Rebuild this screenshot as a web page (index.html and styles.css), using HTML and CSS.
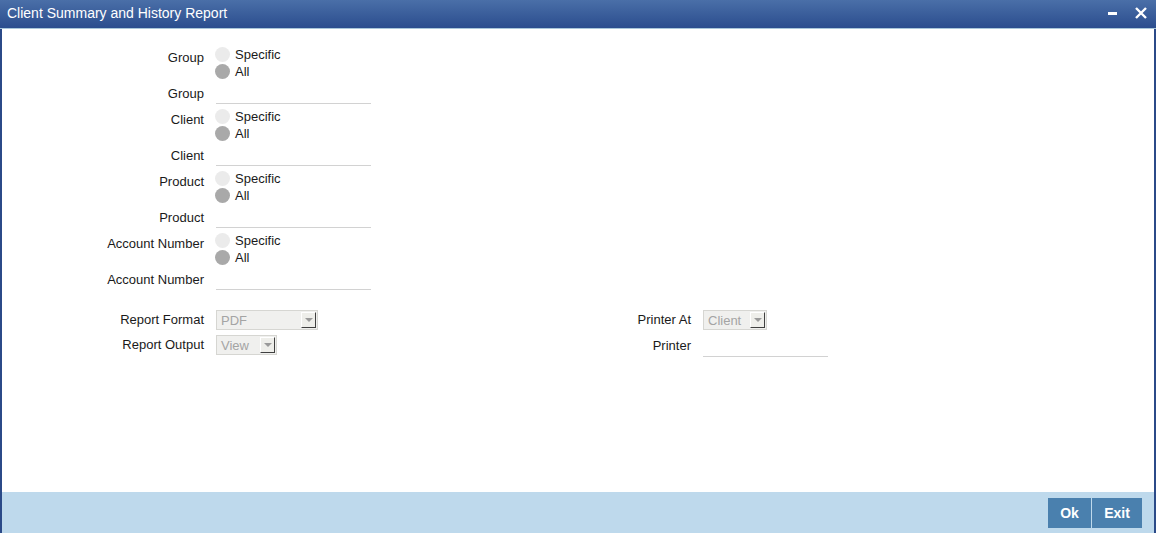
FILE: index.html
```html
<!DOCTYPE html>
<html>

<head>
  <link rel="stylesheet" href="styles.css">
</head>

<body>
  <div class="window">
    <div class="titlebar">
      <span class="title">Client Summary and History Report</span>
      <div class="win-controls">
        <svg class="win-btn" width="14" height="14" viewBox="0 0 14 14">
          <rect x="3" y="6" width="9" height="3" fill="#fff" />
        </svg>
        <svg class="win-btn" width="14" height="14" viewBox="0 0 14 14">
          <path d="M2 2 L12 12 M12 2 L2 12" stroke="#fff" stroke-width="2.4" />
        </svg>
      </div>
    </div>

    <div class="main">
      <div class="form">
        <div class="section">
          <div class="row">
            <label class="lbl lbl-radio">Group</label>
            <div class="radios">
              <div class="radio"><span class="dot"></span>Specific</div>
              <div class="radio"><span class="dot on"></span>All</div>
            </div>
          </div>
          <div class="row text-row">
            <label class="lbl">Group</label>
            <div class="field"></div>
          </div>
        </div>

        <div class="section">
          <div class="row">
            <label class="lbl lbl-radio">Client</label>
            <div class="radios">
              <div class="radio"><span class="dot"></span>Specific</div>
              <div class="radio"><span class="dot on"></span>All</div>
            </div>
          </div>
          <div class="row text-row">
            <label class="lbl">Client</label>
            <div class="field"></div>
          </div>
        </div>

        <div class="section">
          <div class="row">
            <label class="lbl lbl-radio">Product</label>
            <div class="radios">
              <div class="radio"><span class="dot"></span>Specific</div>
              <div class="radio"><span class="dot on"></span>All</div>
            </div>
          </div>
          <div class="row text-row">
            <label class="lbl">Product</label>
            <div class="field"></div>
          </div>
        </div>

        <div class="section">
          <div class="row">
            <label class="lbl lbl-radio">Account Number</label>
            <div class="radios">
              <div class="radio"><span class="dot"></span>Specific</div>
              <div class="radio"><span class="dot on"></span>All</div>
            </div>
          </div>
          <div class="row text-row">
            <label class="lbl">Account Number</label>
            <div class="field"></div>
          </div>
        </div>

        <div class="report">
          <div class="report-col left">
            <div class="row sel-row">
              <label class="lbl">Report Format</label>
              <div class="select sel-format">
                <span>PDF</span>
                <span class="arrow"></span>
              </div>
            </div>
            <div class="row sel-row">
              <label class="lbl">Report Output</label>
              <div class="select sel-output">
                <span>View</span>
                <span class="arrow"></span>
              </div>
            </div>
          </div>
          <div class="report-col right">
            <div class="row sel-row">
              <label class="lbl">Printer At</label>
              <div class="select sel-printer">
                <span>Client</span>
                <span class="arrow"></span>
              </div>
            </div>
            <div class="row sel-row printer-row">
              <label class="lbl">Printer</label>
              <div class="field field-printer"></div>
            </div>
          </div>
        </div>
      </div>

      <div class="footer">
        <button class="btn">Ok</button>
        <button class="btn btn-exit">Exit</button>
      </div>
    </div>
  </div>
</body>

</html>
```

FILE: styles.css
```css
:root {
  --title-top: #4a6fa8;
  --title-bottom: #2b4d8e;
  --frame: #2b4a88;
  --footer: #bed9ec;
  --button: #4a80ae;
  --text: #1a1a1a;
  --line: #d2d2d2;
  --muted: #a4a4a4;
}

* {
  margin: 0;
  padding: 0;
  box-sizing: border-box;
  font-family: 'Liberation Sans', Arial, sans-serif;
}

body {
  width: 1156px;
  height: 541px;
  background: #ffffff;
  color: var(--text);
  overflow: hidden;
}

.window {
  width: 1156px;
  height: 533px;
  display: flex;
  flex-direction: column;
}

.titlebar {
  height: 29px;
  display: flex;
  align-items: center;
  justify-content: space-between;
  padding: 0 8px 2px 7px;
  background: linear-gradient(to bottom, var(--title-top), var(--title-bottom));
  border-bottom: 1px solid #a9c6da;
  color: #ffffff;
}

.title {
  font-size: 14px;
}

.win-controls {
  display: flex;
  gap: 15px;
}

.main {
  flex: 1;
  display: flex;
  flex-direction: column;
  border-left: 2px solid var(--frame);
  border-right: 2px solid var(--frame);
}

.form {
  flex: 1;
  padding-top: 17px;
}

.row {
  display: flex;
  gap: 11px;
  font-size: 13px;
}

.lbl {
  width: 202px;
  text-align: right;
  line-height: 17px;
}

.lbl-radio {
  padding-top: 3px;
}

.section {
  margin-bottom: 4px;
}

.radio {
  display: flex;
  align-items: center;
  gap: 5px;
  height: 17px;
  font-size: 13px;
}

.dot {
  width: 15px;
  height: 15px;
  border-radius: 50%;
  background: #ebebeb;
}

.dot.on {
  background: #a9a9a9;
}

.text-row {
  margin-top: 2px;
  height: 22px;
}

.text-row .lbl {
  padding-top: 3px;
}

.field {
  width: 155px;
  height: 22px;
  margin-left: 1px;
  border-bottom: 1px solid var(--line);
}

.report {
  display: flex;
  padding-top: 16px;
}

.report-col {
  display: flex;
  flex-direction: column;
  gap: 5px;
}

.report-col.left {
  width: 498px;
}

.report-col.right .lbl {
  width: 191px;
}

.sel-row {
  height: 20px;
  align-items: center;
  gap: 12px;
}

.sel-row .lbl {
  line-height: 20px;
}

.printer-row {
  align-items: flex-start;
}

.printer-row .lbl {
  padding-top: 1px;
}

.select {
  height: 20px;
  display: flex;
  align-items: center;
  justify-content: space-between;
  padding: 0 1px 0 4px;
  background: #f0f0ee;
  border: 1px solid #d6d6d2;
  color: var(--muted);
  font-size: 13px;
}

.sel-format {
  width: 102px;
}

.sel-output {
  width: 61px;
}

.sel-printer {
  width: 64px;
}

.arrow {
  width: 15px;
  height: 16px;
  position: relative;
  background: #eeeeea;
  border-top: 1px solid #ffffff;
  border-left: 1px solid #ffffff;
  border-right: 1px solid #404040;
  border-bottom: 1px solid #404040;
}

.arrow::after {
  content: '';
  position: absolute;
  left: 3px;
  top: 5px;
  border-left: 4px solid transparent;
  border-right: 4px solid transparent;
  border-top: 4px solid #9a9a9a;
}

.field-printer {
  width: 125px;
  height: 22px;
  margin-left: 0;
}

.footer {
  height: 41px;
  display: flex;
  justify-content: flex-end;
  align-items: flex-start;
  gap: 1px;
  padding: 6px 12px 0 0;
  background: var(--footer);
}

.btn {
  width: 43px;
  height: 30px;
  border: none;
  background: var(--button);
  color: #ffffff;
  font-size: 14px;
  font-weight: bold;
  cursor: pointer;
}

.btn-exit {
  width: 50px;
}
```
